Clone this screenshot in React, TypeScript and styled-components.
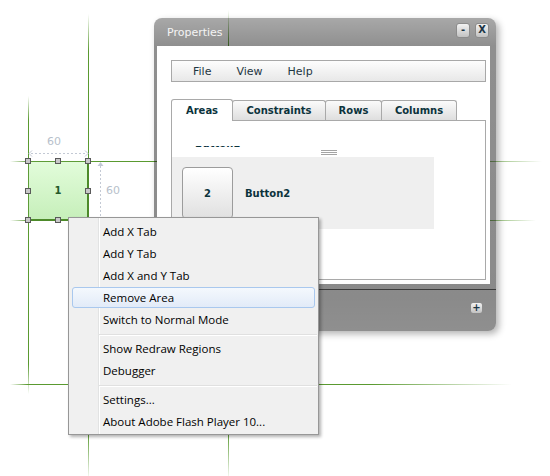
import React from "react";
import styled, { createGlobalStyle } from "styled-components";

const GlobalStyle = createGlobalStyle`
  html, body {
    margin: 0;
    padding: 0;
    background: #ffffff;
  }
  body {
    width: 550px;
    height: 476px;
    overflow: hidden;
  }
`;

const GREEN = "#5a9a30";
const FLEX_TEXT = "#0b333c";

const Stage = styled.div`
  position: relative;
  width: 550px;
  height: 476px;
  overflow: hidden;
  background: #ffffff;
  font-family: "DejaVu Sans", Verdana, sans-serif;
`;

const Guides = styled.svg`
  position: absolute;
  left: 0;
  top: 0;
`;

/* ---------- the selected area ---------- */

const AreaBox = styled.div`
  position: absolute;
  left: 28px;
  top: 161px;
  width: 61px;
  height: 60px;
  box-sizing: border-box;
  border: 1px solid #5e9c38;
  border-right: 2px solid #4d8a2a;
  border-bottom: 2px solid #4d8a2a;
  background: linear-gradient(#e2fcda, #c6efba);
  display: flex;
  align-items: center;
  justify-content: center;
  font-size: 10px;
  font-weight: bold;
  color: #245a2a;
`;

const Handle = styled.span<{ $x: number; $y: number }>`
  position: absolute;
  left: ${(p) => p.$x - 3}px;
  top: ${(p) => p.$y - 3}px;
  width: 6px;
  height: 6px;
  box-sizing: border-box;
  background: #c8c8c8;
  border: 1px solid #5a5a5a;
`;

/* ---------- properties window ---------- */

const Window = styled.div`
  position: absolute;
  left: 154px;
  top: 18px;
  width: 342px;
  display: flex;
  flex-direction: column;
  border-radius: 8px;
  background: linear-gradient(
    rgba(0, 0, 0, 0.34),
    rgba(0, 0, 0, 0.44) 28px,
    rgba(0, 0, 0, 0.46) 280px,
    rgba(0, 0, 0, 0.44)
  );
  box-shadow: 3px 3px 7px rgba(0, 0, 0, 0.3);
`;

const TitleBar = styled.div`
  height: 28px;
  display: flex;
  align-items: center;
  justify-content: space-between;
  padding: 0 7px 0 13px;
`;

const Title = styled.span`
  font-size: 11px;
  color: #f4f4f4;
`;

const TitleButtons = styled.div`
  display: flex;
  gap: 5px;
  margin-top: -4px;
`;

const ChromeButton = styled.span<{ $w: number; $h: number }>`
  width: ${(p) => p.$w}px;
  height: ${(p) => p.$h}px;
  box-sizing: border-box;
  display: flex;
  align-items: center;
  justify-content: center;
  border-radius: 3px;
  border: 1px solid #8c8c8c;
  background: linear-gradient(#f2f2f2, #c2c2c2);
  font-size: 10px;
  font-weight: bold;
  color: #1c3646;
  line-height: 1;
`;

const Body = styled.div`
  height: 238px;
  box-sizing: border-box;
  margin: 0 6px 0 3px;
  padding: 14px 4px 4px 14px;
  background: #ffffff;
  display: flex;
  flex-direction: column;
`;

const MenuBar = styled.div`
  height: 22px;
  box-sizing: border-box;
  flex: none;
  display: flex;
  align-items: center;
  gap: 25px;
  padding-left: 21px;
  border: 1px solid #a8a8a8;
  background: linear-gradient(#fdfdfd, #e8e8e8);
`;

const MenuBarItem = styled.span`
  font-size: 11px;
  color: #1e3642;
`;

const TabRow = styled.div`
  height: 22px;
  flex: none;
  display: flex;
  align-items: flex-start;
  margin-top: 17px;
  margin-bottom: -1px;
  position: relative;
  z-index: 1;
`;

const Tab = styled.div<{ $active?: boolean; $w: number }>`
  width: ${(p) => p.$w}px;
  height: ${(p) => (p.$active ? 22 : 20)}px;
  margin-top: ${(p) => (p.$active ? 0 : 1)}px;
  box-sizing: border-box;
  display: flex;
  align-items: center;
  justify-content: center;
  border: 1px solid #a9a9a9;
  border-bottom: none;
  border-radius: 3px 3px 0 0;
  background: ${(p) =>
    p.$active ? "#ffffff" : "linear-gradient(#fbfbfb, #dedede)"};
  font-size: 10px;
  font-weight: bold;
  color: ${FLEX_TEXT};
  white-space: nowrap;
  & + & {
    margin-left: -1px;
  }
`;

const Panel = styled.div`
  flex: 1;
  border: 1px solid #a9a9a9;
  background: #ffffff;
  display: flex;
  flex-direction: column;
`;

const Strip = styled.div`
  height: 36px;
  box-sizing: border-box;
  padding-top: 25px;
  display: flex;
  flex-direction: column;
`;

/* a row scrolled almost out of view: only the foot of its label shows */
const ClippedLabel = styled.div`
  height: 1px;
  overflow: hidden;
  margin-left: 23px;
  font-size: 10px;
  font-weight: bold;
  color: ${FLEX_TEXT};
  line-height: 12px;
  & > span {
    display: block;
    margin-top: -8px;
  }
`;

const Grip = styled.div`
  align-self: center;
  width: 16px;
  height: 5px;
  margin-top: 3px;
  background: linear-gradient(
    #a4a4a4 0 1px,
    transparent 1px 2px,
    #a4a4a4 2px 3px,
    transparent 3px 4px,
    #a4a4a4 4px 5px
  );
`;

const List = styled.div`
  width: 262px;
  height: 72px;
  box-sizing: border-box;
  padding: 0 10px;
  background: #efefef;
  display: flex;
  align-items: center;
  gap: 12px;
`;

const ItemButton = styled.div`
  width: 51px;
  height: 52px;
  box-sizing: border-box;
  border: 1px solid #9c9c9c;
  border-radius: 4px;
  background: linear-gradient(#ffffff, #e0e0e0);
  display: flex;
  align-items: center;
  justify-content: center;
  font-size: 10px;
  font-weight: bold;
  color: ${FLEX_TEXT};
`;

const ItemLabel = styled.span`
  font-size: 10px;
  font-weight: bold;
  color: ${FLEX_TEXT};
`;

const Divider = styled.div`
  height: 1px;
  margin-top: 5px;
  background: #3c3c3c;
`;

const BottomBar = styled.div`
  height: 41px;
  box-sizing: border-box;
  display: flex;
  justify-content: flex-end;
  align-items: flex-start;
  padding: 12px 13px 0 0;
`;

/* ---------- context menu ---------- */

const ContextMenu = styled.ul`
  position: absolute;
  left: 68px;
  top: 217px;
  width: 251px;
  box-sizing: border-box;
  margin: 0;
  padding: 2px 0;
  list-style: none;
  border: 1px solid #979797;
  background: linear-gradient(
      to right,
      transparent 29px,
      #e2e3e3 29px 30px,
      #ffffff 30px 31px,
      transparent 31px
    ),
    #f0f0f0;
  box-shadow: 2px 2px 3px rgba(0, 0, 0, 0.3);
  font-family: "Open Sans", "Segoe UI", sans-serif;
  font-size: 11.5px;
  color: #000000;
`;

const MenuItem = styled.li<{ $hot?: boolean }>`
  height: 21px;
  box-sizing: border-box;
  margin: 1px 3px 0;
  padding-left: 30px;
  line-height: 19px;
  border: 1px solid ${(p) => (p.$hot ? "#a9c8ee" : "transparent")};
  border-radius: 3px;
  background: ${(p) =>
    p.$hot ? "linear-gradient(#f4f8fd, #e2ebf8)" : "transparent"};
  white-space: nowrap;
`;

const MenuSeparator = styled.li`
  height: 1px;
  margin: 4px 1px 2px 30px;
  background: #e0e0e0;
  border-bottom: 1px solid #ffffff;
`;

const hLines = [
  { y: 161, x1: 10, x2: 542, fade: 0.86 },
  { y: 220, x1: 10, x2: 536, fade: 0.88 },
  { y: 384, x1: 10, x2: 512, fade: 0.72 },
];

const vLines = [
  { x: 28, y1: 96, y2: 394 },
  { x: 88, y1: 14, y2: 480 },
  { x: 228, y1: 10, y2: 480 },
];

const handles = [
  [28, 161],
  [58, 161],
  [88, 161],
  [28, 191],
  [88, 191],
  [28, 220],
  [58, 220],
  [88, 220],
];

const tabs = [
  { label: "Areas", w: 62 },
  { label: "Constraints", w: 94 },
  { label: "Rows", w: 57 },
  { label: "Columns", w: 76 },
];

const menu: (string | null)[] = [
  "Add X Tab",
  "Add Y Tab",
  "Add X and Y Tab",
  "Remove Area",
  "Switch to Normal Mode",
  null,
  "Show Redraw Regions",
  "Debugger",
  null,
  "Settings...",
  "About Adobe Flash Player 10...",
];

const DIM = "#c3c9d4";

export default function App() {
  return (
    <Stage>
      <GlobalStyle />
      <Guides width={550} height={476} viewBox="0 0 550 476">
        <defs>
          {hLines.map((l, i) => (
            <linearGradient key={i} id={`gh${i}`} x1="0" y1="0" x2="1" y2="0">
              <stop offset="0" stopColor={GREEN} stopOpacity="0" />
              <stop offset="0.035" stopColor={GREEN} stopOpacity="1" />
              <stop offset={l.fade} stopColor={GREEN} stopOpacity="1" />
              <stop offset="1" stopColor={GREEN} stopOpacity="0" />
            </linearGradient>
          ))}
          <linearGradient id="gv" x1="0" y1="0" x2="0" y2="1">
            <stop offset="0" stopColor={GREEN} stopOpacity="0" />
            <stop offset="0.08" stopColor={GREEN} stopOpacity="1" />
            <stop offset="0.9" stopColor={GREEN} stopOpacity="1" />
            <stop offset="1" stopColor={GREEN} stopOpacity="0" />
          </linearGradient>
        </defs>
        {hLines.map((l, i) => (
          <rect key={i} x={l.x1} y={l.y} width={l.x2 - l.x1} height={1} fill={`url(#gh${i})`} />
        ))}
        {vLines.map((l, i) => (
          <rect key={i} x={l.x} y={l.y1} width={1} height={l.y2 - l.y1} fill="url(#gv)" />
        ))}

        {/* width dimension */}
        <line x1={31} y1={153.5} x2={86} y2={153.5} stroke={DIM} strokeDasharray="2 2" />
        <path d="M32 150.5 L29 153.5 L32 156.5 M85 150.5 L88 153.5 L85 156.5" stroke={DIM} fill="none" />
        <text x={54} y={145} fontSize={11} fill="#b7bfcb" textAnchor="middle" fontFamily="DejaVu Sans, sans-serif">
          60
        </text>

        {/* height dimension */}
        <line x1={100.5} y1={166} x2={100.5} y2={232} stroke={DIM} strokeDasharray="2 2" />
        <path d="M97.5 166 L100.5 162 L103.5 166 Z" fill={DIM} />
        <text x={106} y={194} fontSize={11} fill="#b7bfcb" fontFamily="DejaVu Sans, sans-serif">
          60
        </text>
      </Guides>

      <AreaBox>
        1
        {handles.map(([x, y], i) => (
          <Handle key={i} $x={x - 29} $y={y - 162} />
        ))}
      </AreaBox>

      <Window>
        <TitleBar>
          <Title>Properties</Title>
          <TitleButtons>
            <ChromeButton $w={14} $h={15}>-</ChromeButton>
            <ChromeButton $w={14} $h={15}>X</ChromeButton>
          </TitleButtons>
        </TitleBar>

        <Body>
          <MenuBar>
            <MenuBarItem>File</MenuBarItem>
            <MenuBarItem>View</MenuBarItem>
            <MenuBarItem>Help</MenuBarItem>
          </MenuBar>

          <TabRow>
            {tabs.map((t, i) => (
              <Tab key={t.label} $w={t.w} $active={i === 0}>
                {t.label}
              </Tab>
            ))}
          </TabRow>

          <Panel>
            <Strip>
              <ClippedLabel>
                <span>Button1</span>
              </ClippedLabel>
              <Grip />
            </Strip>
            <List>
              <ItemButton>2</ItemButton>
              <ItemLabel>Button2</ItemLabel>
            </List>
          </Panel>
        </Body>

        <Divider />
        <BottomBar>
          <ChromeButton $w={13} $h={12}>+</ChromeButton>
        </BottomBar>
      </Window>

      <ContextMenu>
        {menu.map((item, i) =>
          item === null ? (
            <MenuSeparator key={i} />
          ) : (
            <MenuItem key={i} $hot={item === "Remove Area"}>
              {item}
            </MenuItem>
          )
        )}
      </ContextMenu>
    </Stage>
  );
}
